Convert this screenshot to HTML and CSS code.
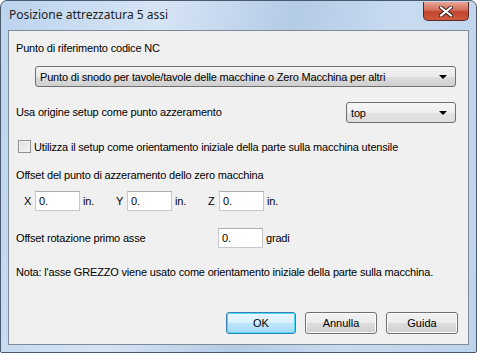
FILE: index.html
```html
<!DOCTYPE html>
<html lang="it">
<head>
  <meta charset="UTF-8">
  <title>Posizione attrezzatura 5 assi</title>
  <link rel="stylesheet" href="styles.css">
</head>
<body>
  <div class="window">
    <div class="titlebar">
      <span class="title">Posizione attrezzatura 5 assi</span>
      <button class="close-btn" aria-label="Chiudi">
        <svg width="14" height="11" viewBox="0 0 14 11">
          <path d="M2 1.5 L12 9.5 M12 1.5 L2 9.5" stroke="#3b2020" stroke-width="4" stroke-linecap="square" fill="none"/>
          <path d="M2 1.5 L12 9.5 M12 1.5 L2 9.5" stroke="#ffffff" stroke-width="2" stroke-linecap="square" fill="none"/>
        </svg>
      </button>
    </div>

    <div class="client">
      <p class="label first">Punto di riferimento codice NC</p>
      <div class="combo wide">
        <span>Punto di snodo per tavole/tavole delle macchine o Zero Macchina per altri</span>
        <span class="arrow"></span>
      </div>

      <div class="row origin">
        <span class="label">Usa origine setup come punto azzeramento</span>
        <div class="combo small">
          <span>top</span>
          <span class="arrow"></span>
        </div>
      </div>

      <label class="check">
        <span class="box"></span>
        <span>Utilizza il setup come orientamento iniziale della parte sulla macchina utensile</span>
      </label>

      <p class="label section">Offset del punto di azzeramento dello zero macchina</p>
      <div class="row offsets">
        <span class="axis">X</span><input class="field" value="0."><span class="unit">in.</span>
        <span class="axis">Y</span><input class="field" value="0."><span class="unit">in.</span>
        <span class="axis">Z</span><input class="field" value="0."><span class="unit">in.</span>
      </div>

      <div class="row rotation">
        <span class="label rot-label">Offset rotazione primo asse</span>
        <input class="field" value="0."><span class="unit">gradi</span>
      </div>

      <p class="label note">Nota: l'asse GREZZO viene usato come orientamento iniziale della parte sulla macchina.</p>

      <div class="buttons">
        <button class="btn default">OK</button>
        <button class="btn">Annulla</button>
        <button class="btn">Guida</button>
      </div>
    </div>
  </div>
</body>
</html>
```

FILE: styles.css
```css
* {
  box-sizing: border-box;
}

body {
  margin: 0;
  width: 477px;
  height: 353px;
  background: #ffffff;
  font-family: 'Liberation Sans', Arial, sans-serif;
  font-size: 11px;
  letter-spacing: -0.18px;
  color: #000;
}

.window {
  width: 477px;
  height: 353px;
  border: 1px solid #4a5a6c;
  border-radius: 7px 7px 2px 2px;
  background: linear-gradient(100deg, #bcd3ee 0%, #d6e5f5 30%, #b4cbe6 55%, #c8dbf0 75%, #bdd3ec 100%);
  padding: 0 7px 7px 7px;
  display: flex;
  flex-direction: column;
}

.titlebar {
  height: 29px;
  display: flex;
  justify-content: space-between;
  align-items: flex-start;
}

.title {
  font-family: 'Noto Sans', 'Liberation Sans', sans-serif;
  font-size: 12px;
  letter-spacing: 0;
  margin-top: 5px;
  margin-left: 1px;
  color: #1e1e1e;
}

.close-btn {
  width: 46px;
  height: 19px;
  margin-top: 1px;
  border: 1px solid #5a2a2a;
  border-top: none;
  border-radius: 0 0 5px 5px;
  background: linear-gradient(#e8a493 0%, #d46f5b 45%, #c2432c 55%, #cf5a3e 100%);
  display: flex;
  align-items: center;
  justify-content: center;
  padding: 0;
}

.client {
  flex: 1;
  background: #f0f0f0;
  border: 1px solid #7f8a96;
  padding: 0 10px 0 7px;
  display: flex;
  flex-direction: column;
}

.label {
  margin: 0;
  line-height: 13px;
}

.first {
  margin-top: 11px;
}

.combo {
  height: 21px;
  border: 1px solid #707070;
  border-radius: 3px;
  background: linear-gradient(#f2f2f2 0%, #ebebeb 50%, #dddddd 51%, #cfcfcf 100%);
  display: flex;
  align-items: center;
  justify-content: space-between;
  padding: 0 5px 0 4px;
}

.combo.wide {
  margin: 11px 0 0 19px;
  width: 421px;
}

.arrow {
  width: 0;
  height: 0;
  border-left: 4px solid transparent;
  border-right: 4px solid transparent;
  border-top: 4px solid #000;
  margin-right: 3px;
}

.row {
  display: flex;
  align-items: center;
}

.origin {
  margin-top: 15px;
  justify-content: space-between;
}

.combo.small {
  width: 110px;
  margin-right: 2px;
  background: linear-gradient(#f6f6f6 0%, #eeeeee 50%, #e4e4e4 51%, #dcdcdc 100%);
}

.check {
  display: flex;
  align-items: center;
  gap: 3px;
  margin-top: 17px;
  margin-left: 2px;
}

.box {
  width: 13px;
  height: 13px;
  border: 1px solid #8e8f8f;
  background: linear-gradient(135deg, #dcdcdc, #f6f6f6);
  box-shadow: inset 0 0 0 1px #f4f4f4;
}

.section {
  margin-top: 16px;
}

.offsets {
  margin-top: 9px;
  margin-left: 8px;
}

.axis {
  width: 11px;
}

.offsets .unit {
  width: 33px;
}

.field {
  width: 45px;
  height: 20px;
  border: 1px solid #c5c8cc;
  border-top-color: #abadb3;
  background: #fff;
  font: inherit;
  padding: 0 3px;
  margin: 0 3px 0 0;
}

.rotation {
  margin-top: 17px;
}

.rot-label {
  width: 202px;
}

.note {
  margin-top: 18px;
}

.buttons {
  margin-top: auto;
  margin-bottom: 10px;
  display: flex;
  justify-content: flex-end;
  gap: 9px;
}

.btn {
  width: 72px;
  height: 22px;
  border: 1px solid #707070;
  border-radius: 3px;
  background: linear-gradient(#f2f2f2 0%, #ebebeb 50%, #dddddd 51%, #cfcfcf 100%);
  font: inherit;
  color: #000;
  box-shadow: inset 0 0 0 1px #fcfcfc;
}

.btn.default {
  width: 70px;
  border-color: #3c7fb1;
  background: linear-gradient(#eaf6fd 0%, #d9f0fc 50%, #bee6fd 51%, #a7d9f5 100%);
  box-shadow: inset 0 0 0 1px #48d8fb;
}
```
